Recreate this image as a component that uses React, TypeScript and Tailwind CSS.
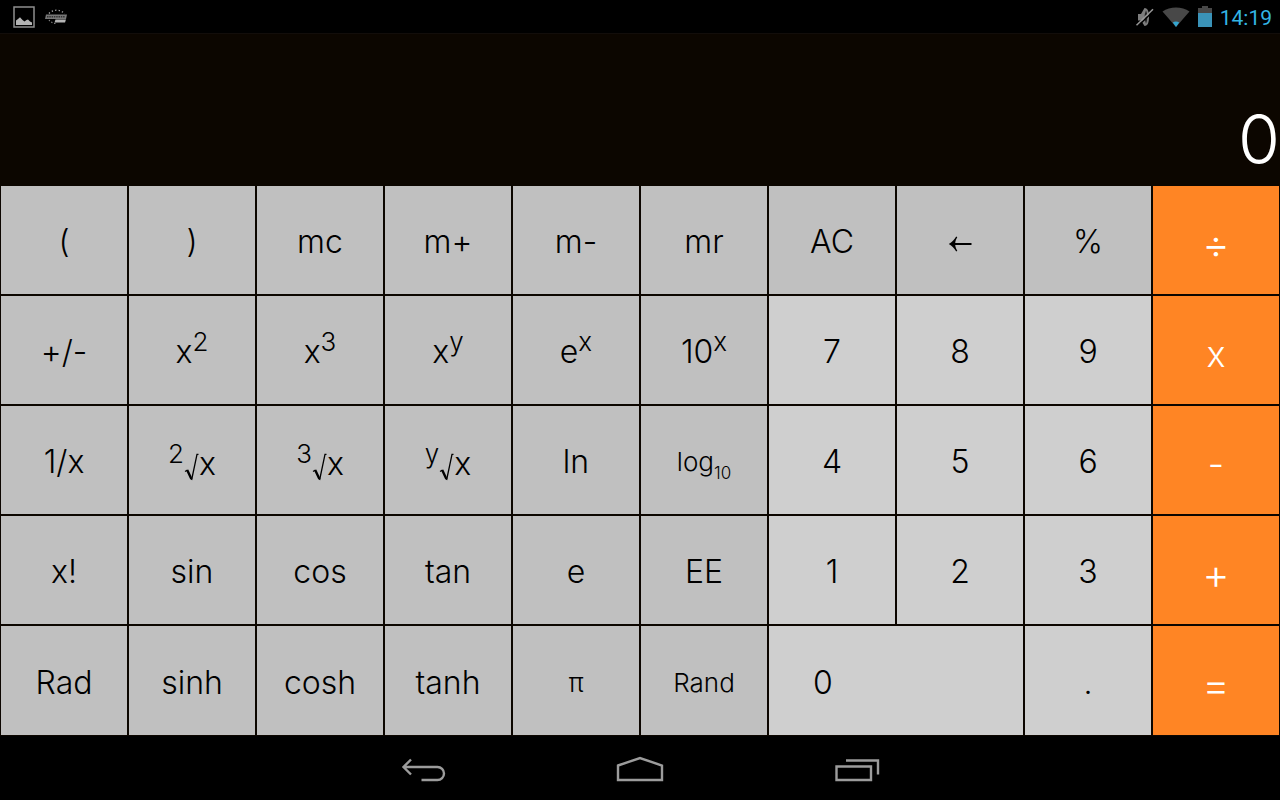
import { useState, type ReactNode } from "react";

type Tone = "function" | "digit" | "operator";

interface Key {
  id: string;
  label: ReactNode;
  tone: Tone;
  name?: string;
  wide?: boolean;
}

function Sup({ children }: { children: ReactNode }) {
  return <span className="align-[12px] text-[26px] leading-[0]">{children}</span>;
}

function Power({ base, exponent }: { base: string; exponent: string }) {
  return (
    <span>
      {base}
      <Sup>{exponent}</Sup>
    </span>
  );
}

function Root({ degree }: { degree: string }) {
  return (
    <span className="pt-1">
      <Sup>{degree}</Sup>
      <svg className="inline h-[28px] w-[15px] align-[-6px]" viewBox="0 0 15 28" fill="none" stroke="currentColor" aria-hidden="true">
        <path d="M1 18.5L3.5 17" strokeWidth="1.3" />
        <path d="M3.2 17L7.4 26" strokeWidth="2.4" />
        <path d="M7.6 27L13 1.3H14.5" strokeWidth="1.3" />
      </svg>
      x
    </span>
  );
}

const backspace = (
  <svg className="mt-1 h-4 w-6" viewBox="0 0 24 16" aria-hidden="true">
    <path d="M23.500 7H7.200C7.500 4.500 8.300 2.800 9.300 1.300L8.200 .6C6.300 3.800 4 6.200 .8 8C4 9.800 6.300 12.200 8.200 15.400L9.300 14.700C8.300 13.200 7.500 11.500 7.200 9H23.500Z" fill="currentColor" />
  </svg>
);

const fn = (id: string, label: ReactNode = id, name?: string): Key => ({ id, label, name, tone: "function" });
const digit = (id: string, wide = false): Key => ({ id, label: id, tone: "digit", wide });
const op = (id: string, name: string): Key => ({
  id,
  name,
  label: id === "x" || id === "-" ? <span className="text-[36px]">{id}</span> : id,
  tone: "operator",
});

const keys: Key[] = [
  fn("("), fn(")"), fn("mc"), fn("m+"), fn("m-"), fn("mr"), fn("AC"), fn("back", backspace, "Backspace"), fn("%"), op("÷", "Divide"),
  fn("+/-"),
  fn("x2", <Power base="x" exponent="2" />),
  fn("x3", <Power base="x" exponent="3" />),
  fn("xy", <Power base="x" exponent="y" />),
  fn("ex", <Power base="e" exponent="x" />),
  fn("10x", <Power base="10" exponent="x" />),
  digit("7"), digit("8"), digit("9"), op("x", "Multiply"),
  fn("1/x"),
  fn("root2", <Root degree="2" />, "Square root"),
  fn("root3", <Root degree="3" />, "Cube root"),
  fn("rooty", <Root degree="y" />, "Root of degree y"),
  fn("ln"),
  fn("log10", <span className="text-[26px]">log<span className="align-[-8px] text-[17px] leading-[0]">10</span></span>),
  digit("4"), digit("5"), digit("6"), op("-", "Subtract"),
  fn("x!"), fn("sin"), fn("cos"), fn("tan"), fn("e"), fn("EE"),
  digit("1"), digit("2"), digit("3"), op("+", "Add"),
  fn("Rad"), fn("sinh"), fn("cosh"), fn("tanh"),
  fn("π", <span className="text-[26px]">π</span>),
  fn("Rand", <span className="text-[26px]">Rand</span>),
  digit("0", true), digit("."), op("=", "Equals"),
];

const tones: Record<Tone, string> = {
  function: "bg-[#c0c0c0] pt-1 text-[32px] text-black",
  digit: "bg-[#cfcfcf] pt-1 text-[32px] text-black",
  operator: "bg-[#ff8524] pt-2 text-[42px] text-white",
};

function StatusBar() {
  return (
    <header className="flex h-[34px] items-center justify-between border-b border-[#120d0a] bg-black pr-2 pl-3">
      <div className="flex items-center gap-2">
        <svg className="size-6" viewBox="0 0 24 24" aria-label="Picture saved" role="img">
          <rect x="2" y="2" width="20" height="20" fill="none" stroke="#8e8e8e" strokeWidth="1.500" />
          <path d="M4 20V15.500L6 14L8 12.200L10.500 15L12.500 16.500L14.500 15L16 14.500L18 16.500L20 17.500V20Z" fill="#b4b4b4" />
        </svg>
        <svg className="h-4 w-6" viewBox="0 0 24 16" aria-label="Sport news" role="img">
          <path d="M5 4.500C9 0 17 0 20.500 5" fill="none" stroke="#aaa" strokeWidth="1.300" strokeDasharray="1.3 2.2" />
          <path d="M5 11C6.500 13 9 14.500 12 14.500" fill="none" stroke="#888" strokeWidth="1.200" strokeDasharray="1.3 1.800" />
          <path d="M2 5.500H23L22 10H1Z" fill="#777" />
          <path d="M3 7.800H21" stroke="#333" strokeWidth="1.500" strokeDasharray="1.5 .8" />
          <path d="M11.500 10.500H22L21 13.500H10.500Z" fill="#b5b5b5" />
        </svg>
      </div>
      <div className="flex items-center gap-2">
        <svg className="h-5 w-[18px]" viewBox="0 0 18 20" aria-label="Muted" role="img">
          <path d="M2 7H5L8.500 1C12 1 13 5 13 10S12 19 8.500 19L5 13.500H2Z" fill="#7d7d7d" />
          <path d="M10 3.500C8 7.500 8 12.500 10 16.500C11.600 14 11.600 6 10 3.500Z" fill="#222" />
          <path d="M1.500 19.500L18 3.500" stroke="#000" strokeWidth="1.500" />
          <path d="M.5 18.300L17 2.300" stroke="#999" strokeWidth="1.500" />
        </svg>
        <svg className="h-5 w-7" viewBox="0 0 28 20" aria-label="Wi-Fi" role="img">
          <path d="M.5 4.500C8-1 20-1 27.500 4.500L14 20Z" fill="#484848" />
          <path d="M10.800 15.500C12.500 14 15.500 14 17.200 15.500L14 20Z" fill="#33a5cf" />
        </svg>
        <svg className="h-[21px] w-[14px]" viewBox="0 0 14 21" aria-label="Battery" role="img">
          <path d="M0 2H4V0H10V2H14V8H0Z" fill="#484848" />
          <path d="M0 7H14V21H0Z" fill="#3a93b8" />
        </svg>
        <time className="pt-0.5 font-[Roboto,sans-serif] text-[21px] leading-8 font-normal text-[#33b5e5]">14:19</time>
      </div>
    </header>
  );
}

function NavBar() {
  const button = "flex h-16 w-[96px] items-center justify-center pt-1 text-[#9c9c9c]";
  return (
    <nav className="flex h-16 items-center justify-center gap-[121px] bg-black">
      <button className={button} aria-label="Back">
        <svg className="h-7 w-12" viewBox="0 0 48 28" fill="none" stroke="currentColor" strokeWidth="2.4">
          <path d="M12 3.500L4.500 11L12 18.500M4.500 11H38.500A6.500 6.500 0 0 1 38.500 24H22.500" />
        </svg>
      </button>
      <button className={button} aria-label="Home">
        <svg className="h-7 w-12" viewBox="0 0 48 28" fill="none" stroke="currentColor" strokeWidth="2.4">
          <path d="M2 9.500L24 2L46 9.500V24H2Z" />
        </svg>
      </button>
      <button className={button} aria-label="Recent apps">
        <svg className="h-7 w-12" viewBox="0 0 48 28" fill="none" stroke="currentColor" strokeWidth="2.4">
          <path d="M3.500 10.500H38V24H3.500ZM13 4.500H45V18.500" />
        </svg>
      </button>
    </nav>
  );
}

export default function App() {
  const [value, setValue] = useState("0");

  const press = (key: Key) => {
    if (key.tone === "digit") setValue((v) => (v === "0" && key.id !== "." ? key.id : v + key.id));
    if (key.id === "AC") setValue("0");
    if (key.id === "back") setValue((v) => v.slice(0, -1) || "0");
  };

  return (
    <div className="flex min-h-screen flex-col bg-[#0c0600] font-[Inter,'Liberation_Sans',sans-serif] font-light">
      <StatusBar />
      <output className="flex h-[151px] items-end justify-end pb-2 text-[68px] leading-[76px] text-white">{value}</output>
      <main className="grid flex-1 grid-cols-10 grid-rows-[108fr_108fr_108fr_108fr_109fr] gap-[2px] p-px">
        {keys.map((key, i) => (
          <button
            key={i}
            aria-label={key.name}
            onClick={() => press(key)}
            className={`flex items-center leading-10 ${tones[key.tone]} ${key.wide ? "col-span-2 justify-start pl-11" : "justify-center"}`}
          >
            {key.label}
          </button>
        ))}
      </main>
      <NavBar />
    </div>
  );
}
